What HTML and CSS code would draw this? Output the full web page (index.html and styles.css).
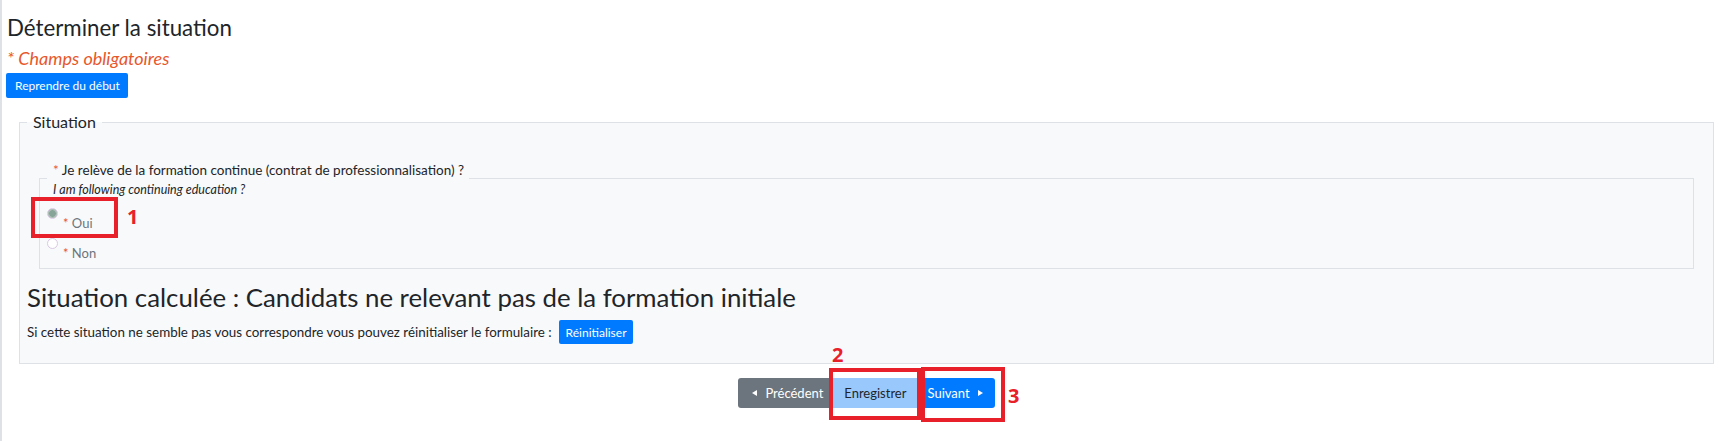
FILE: index.html
```html
<!DOCTYPE html>
<html lang="fr">
<head>
<meta charset="utf-8">
<title>Déterminer la situation</title>
<link rel="stylesheet" href="styles.css">
</head>
<body>
<div class="page">
  <h1 class="title">Déterminer la situation</h1>
  <p class="required-note"><span class="star">*</span> Champs obligatoires</p>
  <button type="button" class="btn btn-primary btn-restart">Reprendre du début</button>

  <fieldset class="section">
    <legend class="section-legend">Situation</legend>
    <div class="question" role="group">
      <div class="q-label"><span class="star">*</span> Je relève de la formation continue (contrat de professionnalisation) ?</div>
      <div class="hint">I am following continuing education ?</div>
      <div class="options">
        <label class="option">
          <span class="radio checked"></span>
          <span class="opt-text"><span class="star">*</span> Oui</span>
        </label>
        <label class="option">
          <span class="radio"></span>
          <span class="opt-text"><span class="star">*</span> Non</span>
        </label>
      </div>
    </div>
    <h2 class="result">Situation calculée : Candidats ne relevant pas de la formation initiale</h2>
    <div class="reset-row">
      <span>Si cette situation ne semble pas vous correspondre vous pouvez réinitialiser le formulaire :</span>
      <button type="button" class="btn btn-primary btn-reset">Réinitialiser</button>
    </div>
  </fieldset>

  <div class="nav">
    <div class="btn-group">
      <button type="button" class="btn btn-secondary btn-nav"><svg class="tri" width="5" height="6" viewBox="0 0 5 6"><path d="M5 0 L0 3 L5 6 Z" fill="currentColor"/></svg>Précédent</button>
      <button type="button" class="btn btn-light-primary btn-nav">Enregistrer</button>
      <button type="button" class="btn btn-primary btn-nav">Suivant<svg class="tri tri-right" width="5" height="6" viewBox="0 0 5 6"><path d="M0 0 L5 3 L0 6 Z" fill="currentColor"/></svg></button>
    </div>
  </div>

  <span class="annot-box box-1"></span>
  <span class="annot-num num-1">1</span>
  <span class="annot-box box-2"></span>
  <span class="annot-num num-2">2</span>
  <span class="annot-box box-3"></span>
  <span class="annot-num num-3">3</span>
</div>
</body>
</html>
```

FILE: styles.css
```css
html, body {
  margin: 0;
  padding: 0;
  background: #ffffff;
}

body {
  font-family: Lato, "Open Sans", "DejaVu Sans", sans-serif;
  color: #212529;
}

.page {
  position: relative;
  box-sizing: border-box;
  min-height: 441px;
  border-left: 2px solid #dee2e6;
  padding: 0 4px;
  overflow: hidden;
}

.title {
  margin: 15px 0 0 1px;
  font-size: 22.3px;
  line-height: 26px;
  font-weight: 400;
}

.star {
  color: #e8572a;
}

.required-note {
  margin: 7px 0 0 1px;
  font-size: 18px;
  line-height: 20px;
  font-style: italic;
  color: #e8572a;
}

.btn {
  font-family: inherit;
  border: 0;
  cursor: pointer;
  display: inline-flex;
  align-items: center;
  justify-content: center;
  box-sizing: border-box;
}

.btn-primary {
  background: #007bff;
  color: #ffffff;
}

.btn-secondary {
  background: #6c757d;
  color: #ffffff;
}

.btn-light-primary {
  background: #99c8fd;
  color: #212529;
}

.btn-restart {
  margin-top: 5px;
  height: 25px;
  padding: 0 8px 0 9px;
  font-size: 12px;
  border-radius: 2px;
}

.section {
  margin: 14px 13px 0 13px;
  padding: 0 7px 19px 7px;
  border: 1px solid #dee2e6;
  background: #f8f9fa;
  min-width: 0;
}

.section-legend {
  padding: 0 6px;
  font-size: 16px;
  line-height: 20px;
  color: #212529;
}

.question {
  margin: 46px 12px 0 12px;
  border: 1px solid #dee2e6;
}

.q-label {
  width: max-content;
  margin: -18px 0 0 7px;
  padding: 0 5px 0 6px;
  background: #f8f9fa;
  font-size: 13.5px;
  line-height: 18px;
}

.hint {
  margin-top: 2px;
  padding-left: 13px;
  font-size: 12.5px;
  line-height: 18px;
  font-style: italic;
}

.options {
  margin-top: 9px;
}

.option {
  display: flex;
  align-items: flex-start;
  height: 30px;
}

.radio {
  flex: none;
  width: 11px;
  height: 11px;
  margin-left: 7px;
  box-sizing: border-box;
  border-radius: 50%;
  border: 1px solid #d9c9e3;
  background: #ffffff;
}

.radio.checked {
  background: radial-gradient(circle, #86a497 0 3px, #a9bdb3 3.5px 4.5px, #e7dfec 5px);
}

.opt-text {
  margin-left: 5px;
  padding-top: 6px;
  font-size: 13px;
  line-height: 18px;
  color: #6c757d;
}

.result {
  margin: 13px 0 0 0;
  font-size: 25.8px;
  line-height: 30px;
  font-weight: 400;
}

.reset-row {
  display: flex;
  align-items: center;
  gap: 7px;
  margin-top: 8px;
  font-size: 13.4px;
}

.btn-reset {
  height: 24px;
  padding: 0 6px 0 7px;
  font-size: 12px;
  border-radius: 2px;
}

.nav {
  display: flex;
  justify-content: center;
  margin-top: 14px;
}

.btn-group {
  display: flex;
}

.btn-nav {
  height: 30px;
  padding: 0 12px;
  font-size: 13px;
}

.btn-group .btn-nav:first-child {
  border-radius: 3px 0 0 3px;
  padding-left: 14px;
  padding-right: 9px;
}

.btn-group .btn-nav:last-child {
  border-radius: 0 3px 3px 0;
  padding-left: 9px;
}

.tri {
  margin-right: 8px;
}

.tri.tri-right {
  margin-right: 0;
  margin-left: 8px;
}

.annot-box {
  position: absolute;
  box-sizing: border-box;
  border: 4px solid #e8202a;
}

.annot-num {
  position: absolute;
  font-family: "Open Sans", Lato, sans-serif;
  font-weight: 700;
  font-size: 20px;
  line-height: 20px;
  color: #e8202a;
}

.box-1 { left: 29px; top: 197px; width: 87px; height: 41px; }
.num-1 { left: 125px; top: 207px; }
.box-2 { left: 827px; top: 368px; width: 92px; height: 52px; }
.num-2 { left: 830px; top: 345px; }
.box-3 { left: 919px; top: 367px; width: 84px; height: 55px; }
.num-3 { left: 1006px; top: 386px; }
```
